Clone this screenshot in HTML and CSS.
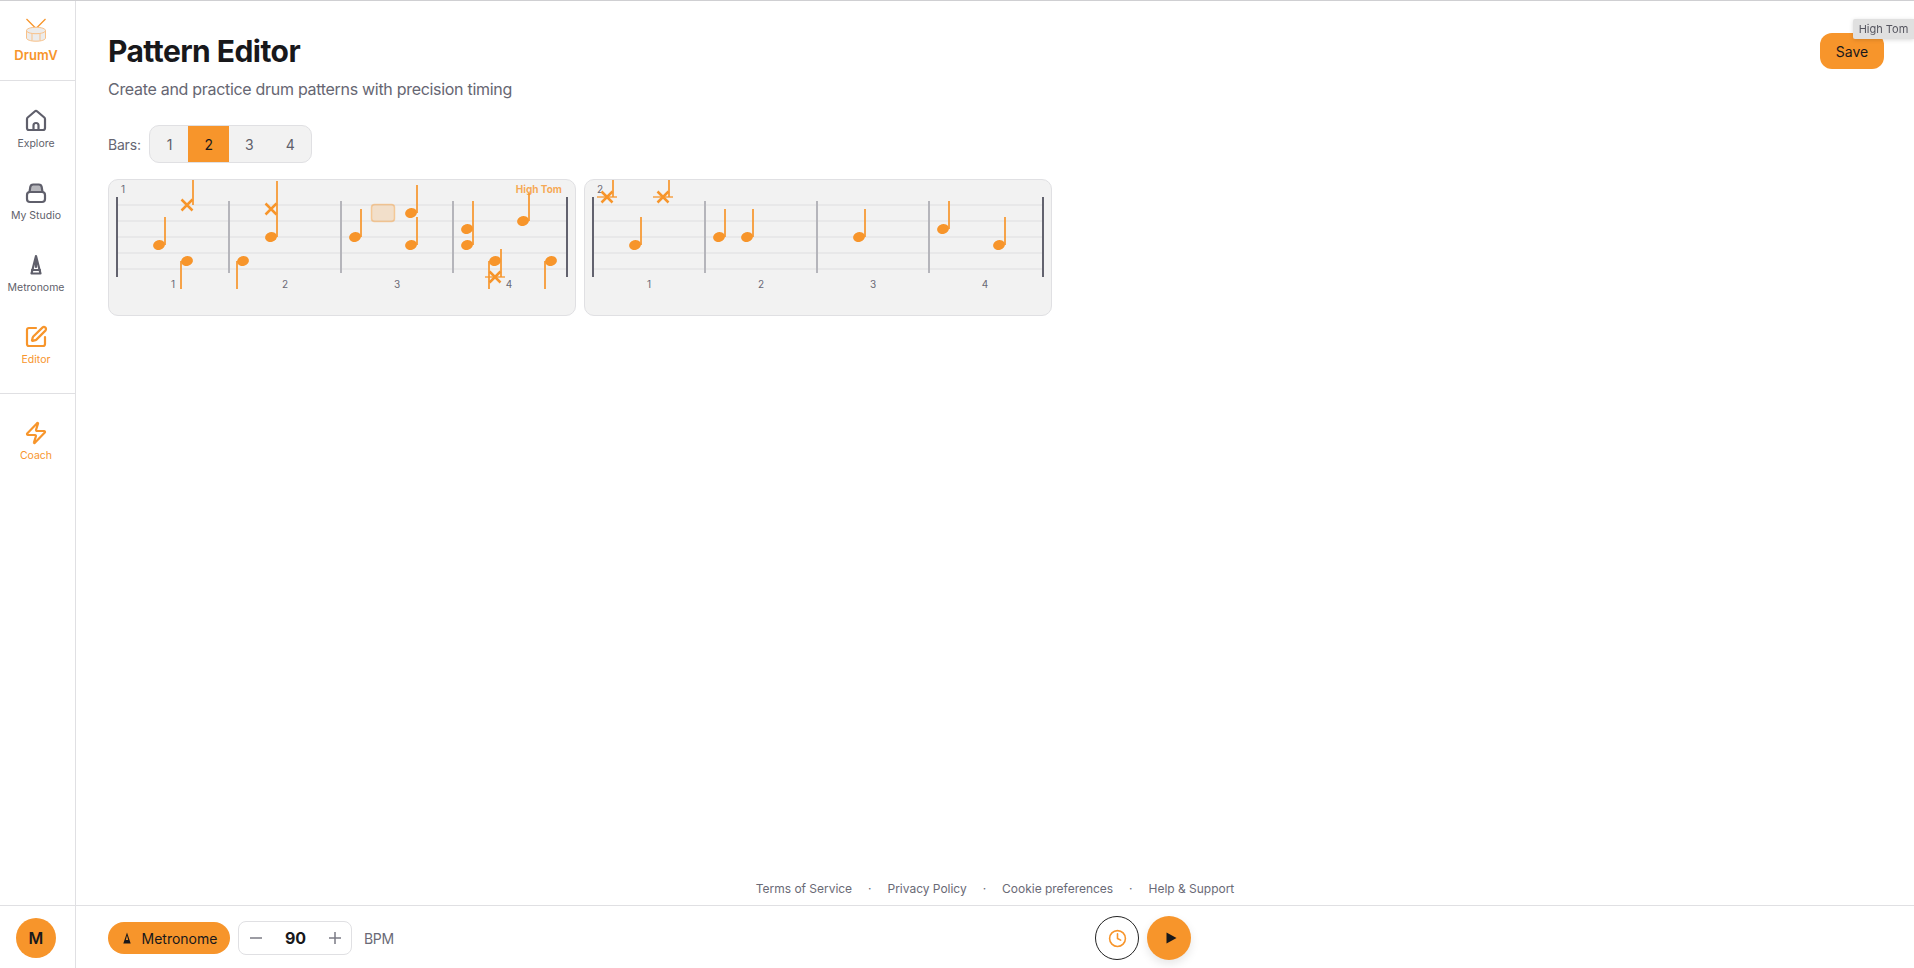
FILE: index.html
```html
<!DOCTYPE html>
<html lang="en">
<head>
<meta charset="utf-8">
<title>Pattern Editor</title>
<link rel="stylesheet" href="styles.css">
</head>
<body>
<div class="app">
  <div class="upper">
    <aside class="sidebar">
      <div class="brand">
        <svg class="logo" viewBox="0 0 24 26" width="24" height="26">
          <path class="logo-stick" d="M2.5 2 12 11.5 21.5 2"/>
          <path class="logo-body" d="M2.5 13.5c0-1.800 4-3.200 9.500-3.200s9.500 1.400 9.500 3.200v7.500c0 1.800-4 3.200-9.500 3.200s-9.500-1.400-9.500-3.200z"/>
          <path class="logo-rim" d="M2.500 13.500c0 1.800 4 3.200 9.500 3.200s9.500-1.400 9.500-3.200M8 16.500v7M16 16.500v7"/>
        </svg>
        <span class="brand-name">DrumV</span>
      </div>
      <nav class="nav nav-main">
        <a class="nav-item">
          <svg class="icon" viewBox="0 0 24 24"><path d="M3 10a2 2 0 0 1 .7-1.500l7-6a2 2 0 0 1 2.600 0l7 6A2 2 0 0 1 21 10v9a2 2 0 0 1-2 2H5a2 2 0 0 1-2-2z"/><path d="M14.500 21v-4.500a2.500 2.500 0 0 0-5 0V21"/></svg>
          <span>Explore</span>
        </a>
        <a class="nav-item">
          <svg class="icon" viewBox="0 0 24 24"><rect x="3" y="11" width="18" height="10" rx="3"/><path class="half" d="M5.500 11 6.300 6a3 3 0 0 1 3-2.500h5.400a3 3 0 0 1 3 2.500l.8 5z"/></svg>
          <span>My Studio</span>
        </a>
        <a class="nav-item">
          <svg class="icon" viewBox="0 0 24 24"><path d="M12 3 7.500 20.500h9z"/><path d="M12 8v6M8 17h8"/></svg>
          <span>Metronome</span>
        </a>
        <a class="nav-item is-active">
          <svg class="icon" viewBox="0 0 24 24"><path d="M12 3H5a2 2 0 0 0-2 2v14a2 2 0 0 0 2 2h14a2 2 0 0 0 2-2v-7"/><path d="M18.400 2.600a2.100 2.100 0 1 1 3 3L12.400 14.600a2 2 0 0 1-.9.500l-2.900.800a.5.5 0 0 1-.6-.6l.8-2.900a2 2 0 0 1 .5-.9z"/></svg>
          <span>Editor</span>
        </a>
      </nav>
      <nav class="nav nav-coach">
        <a class="nav-item is-active">
          <svg class="icon" viewBox="0 0 24 24"><path d="M4 14a1 1 0 0 1-.8-1.600l9.900-10.200a.5.5 0 0 1 .9.500l-1.900 6a1 1 0 0 0 .9 1.300h7a1 1 0 0 1 .8 1.600l-9.900 10.200a.5.5 0 0 1-.9-.500l1.900-6a1 1 0 0 0-.9-1.300z"/></svg>
          <span>Coach</span>
        </a>
      </nav>
    </aside>

    <main class="main">
      <div class="content">
        <header class="page-head">
          <div>
            <h1 class="title">Pattern Editor</h1>
            <p class="subtitle">Create and practice drum patterns with precision timing</p>
          </div>
          <button class="save">Save</button>
        </header>

        <div class="bars-row">
          <span class="bars-label">Bars:</span>
          <div class="bars-group">
            <button class="bar-btn">1</button>
            <button class="bar-btn is-on">2</button>
            <button class="bar-btn">3</button>
            <button class="bar-btn">4</button>
          </div>
        </div>

        <div class="cards">
          <section class="card">
            <svg class="score" viewBox="109 180 466 135" width="466" height="135">
              <g class="staff"><path d="M117 205H567M117 221H567M117 237H567M117 253H567M117 269H567"/></g>
              <path class="bar-end" d="M117 197V277M567 197V277"/>
              <path class="bar-mid" d="M229 201V273M341 201V273M453 201V273"/>
              <text class="measure" x="123" y="193" text-anchor="middle">1</text>
              <g class="beats" text-anchor="middle">
                <text x="173" y="288">1</text><text x="285" y="288">2</text><text x="397" y="288">3</text><text x="509" y="288">4</text>
              </g>
              <rect class="hover" x="371.500" y="204.500" width="23" height="17" rx="3"/>
              <path class="stem" d="M165 217V245M193 170V205M181 261V289M237 261V289M277 181V237M361 209V237M417 185V213M417 217V245M473 201V245M501 249V277M489 261V289M529 193V221M545 261V289"/>
              <path class="ledger" d="M485 277H505"/>
              <path class="cross" d="M181.500 199.500 192.500 210.500M192.500 199.500 181.500 210.500M265.500 203.500 276.500 214.500M276.500 203.500 265.500 214.500M489.500 271.500 500.500 282.500M500.500 271.500 489.500 282.500"/>
              <g class="heads">
                <ellipse cx="159" cy="245" rx="6" ry="5" transform="rotate(-15 159 245)"/>
                <ellipse cx="187" cy="261" rx="6" ry="5" transform="rotate(-15 187 261)"/>
                <ellipse cx="243" cy="261" rx="6" ry="5" transform="rotate(-15 243 261)"/>
                <ellipse cx="271" cy="237" rx="6" ry="5" transform="rotate(-15 271 237)"/>
                <ellipse cx="355" cy="237" rx="6" ry="5" transform="rotate(-15 355 237)"/>
                <ellipse cx="411" cy="213" rx="6" ry="5" transform="rotate(-15 411 213)"/>
                <ellipse cx="411" cy="245" rx="6" ry="5" transform="rotate(-15 411 245)"/>
                <ellipse cx="467" cy="229" rx="6" ry="5" transform="rotate(-15 467 229)"/>
                <ellipse cx="467" cy="245" rx="6" ry="5" transform="rotate(-15 467 245)"/>
                <ellipse cx="495" cy="261" rx="6" ry="5" transform="rotate(-15 495 261)"/>
                <ellipse cx="523" cy="221" rx="6" ry="5" transform="rotate(-15 523 221)"/>
                <ellipse cx="551" cy="261" rx="6" ry="5" transform="rotate(-15 551 261)"/>
              </g>
              <text class="hover-label" x="562" y="193" text-anchor="end">High Tom</text>
            </svg>
          </section>
          <section class="card">
            <svg class="score" viewBox="585 180 466 135" width="466" height="135">
              <g class="staff"><path d="M593 205H1043M593 221H1043M593 237H1043M593 253H1043M593 269H1043"/></g>
              <path class="bar-end" d="M593 197V277M1043 197V277"/>
              <path class="bar-mid" d="M705 201V273M817 201V273M929 201V273"/>
              <text class="measure" x="600" y="193" text-anchor="middle">2</text>
              <g class="beats" text-anchor="middle">
                <text x="649" y="288">1</text><text x="761" y="288">2</text><text x="873" y="288">3</text><text x="985" y="288">4</text>
              </g>
              <path class="stem" d="M613 170V197M669 170V197M641 217V245M725 209V237M753 209V237M865 209V237M949 201V229M1005 217V245"/>
              <path class="ledger" d="M597 197H617M653 197H673"/>
              <path class="cross" d="M601.500 191.500 612.500 202.500M612.500 191.500 601.500 202.500M657.500 191.500 668.500 202.500M668.500 191.500 657.500 202.500"/>
              <g class="heads">
                <ellipse cx="635" cy="245" rx="6" ry="5" transform="rotate(-15 635 245)"/>
                <ellipse cx="719" cy="237" rx="6" ry="5" transform="rotate(-15 719 237)"/>
                <ellipse cx="747" cy="237" rx="6" ry="5" transform="rotate(-15 747 237)"/>
                <ellipse cx="859" cy="237" rx="6" ry="5" transform="rotate(-15 859 237)"/>
                <ellipse cx="943" cy="229" rx="6" ry="5" transform="rotate(-15 943 229)"/>
                <ellipse cx="999" cy="245" rx="6" ry="5" transform="rotate(-15 999 245)"/>
              </g>
            </svg>
          </section>
        </div>
      </div>

      <footer class="links">
        <a>Terms of Service</a><span class="dot">·</span>
        <a>Privacy Policy</a><span class="dot">·</span>
        <a>Cookie preferences</a><span class="dot">·</span>
        <a>Help &amp; Support</a>
      </footer>
    </main>
  </div>

  <div class="lower">
    <div class="avatar-cell"><span class="avatar">M</span></div>
    <div class="transport">
      <div class="transport-left">
        <button class="metro-pill">
          <svg class="metro-icon" viewBox="0 0 12 12" width="12" height="12"><path d="M6 .5 2.300 11.500h7.400zM6 3.500 4.800 8h2.400z" fill-rule="evenodd"/></svg>
          Metronome
        </button>
        <div class="stepper">
          <svg class="step" viewBox="0 0 14 14" width="14" height="14"><path d="M1 7h12"/></svg>
          <span class="bpm-value">90</span>
          <svg class="step" viewBox="0 0 14 14" width="14" height="14"><path d="M1 7h12M7 1v12"/></svg>
        </div>
        <span class="bpm-label">BPM</span>
      </div>
      <div class="transport-center">
        <button class="round clock">
          <svg viewBox="0 0 24 24" width="19" height="19"><circle cx="12" cy="12" r="10"/><path d="M12 6v6l4 2"/></svg>
        </button>
        <button class="round play">
          <svg viewBox="0 0 12 12" width="12" height="12"><path d="M1.500 .5 11.500 6l-10 5.500z"/></svg>
        </button>
      </div>
    </div>
  </div>
</div>
<div class="tooltip">High Tom</div>
</body>
</html>
```
FILE: styles.css
```css
* { box-sizing: border-box; }
html, body { height: 100%; }
body {
  margin: 0;
  font-family: Inter, "Liberation Sans", sans-serif;
  color: #18181b;
  background: #fff;
  overflow: hidden;
}
button { font-family: inherit; cursor: pointer; }

.app {
  height: 968px;
  display: flex;
  flex-direction: column;
  border-top: 1px solid #cfcfd2;
}
.upper { flex: 1; display: flex; min-height: 0; }

/* Sidebar */
.sidebar {
  width: 76px;
  flex: none;
  border-right: 1px solid #e0e0e3;
  display: flex;
  flex-direction: column;
}
.brand {
  height: 80px;
  flex: none;
  border-bottom: 1px solid #e0e0e3;
  padding: 16px 3px 0 0;
  display: flex;
  flex-direction: column;
  align-items: center;
  gap: 4px;
}
.logo { display: block; }
.logo-stick { fill: none; stroke: #f7952b; stroke-width: 1.300; }
.logo-body { fill: #ececec; stroke: #f9c188; stroke-width: 1; }
.logo-rim { fill: none; stroke: #f9c188; stroke-width: 1; }
.brand-name { font-size: 13px; line-height: 16px; font-weight: 600; color: #f7952b; letter-spacing: .1px; }

.nav { display: flex; flex-direction: column; }
.nav-main { padding: 13px 3px 11px 0; border-bottom: 1px solid #e0e0e3; }
.nav-coach { padding: 12px 3px 0 0; }
.nav-item {
  height: 72px;
  display: flex;
  flex-direction: column;
  align-items: center;
  justify-content: center;
  gap: 4px;
  font-size: 10.500px;
  line-height: 14px;
  color: #5f5f6b;
}
.nav-item.is-active { color: #f7952b; }
.icon {
  width: 24px;
  height: 24px;
  fill: none;
  stroke: currentColor;
  stroke-width: 2.200;
  stroke-linecap: round;
  stroke-linejoin: round;
}
.icon .half { fill: currentColor; fill-opacity: .45; }

/* Main */
.main { flex: 1; min-width: 0; display: flex; flex-direction: column; }
.content { flex: 1; padding: 32px 30px 0 32px; }
.page-head { display: flex; justify-content: space-between; align-items: flex-start; }
.title { margin: 0; font-size: 30px; line-height: 36px; font-weight: 700; letter-spacing: -.55px; color: #18181b; }
.subtitle { margin: 8px 0 0; font-size: 16px; line-height: 24px; letter-spacing: -.3px; color: #666672; }
.save {
  width: 64px;
  height: 36px;
  border: 0;
  border-radius: 12px;
  background: #f7952b;
  color: #18181b;
  font-size: 14px;
}

.bars-row { margin-top: 24px; display: flex; align-items: center; gap: 8px; }
.bars-label { font-size: 14px; letter-spacing: -.2px; color: #666672; }
.bars-group {
  display: flex;
  height: 38px;
  padding-left: 1px;
  border: 1px solid #e0e0e3;
  border-radius: 10px;
  background: #f2f2f2;
  overflow: hidden;
}
.bar-btn {
  border: 0;
  background: transparent;
  padding: 0 16px;
  font-size: 14px;
  color: #5f5f6b;
}
.bar-btn.is-on { background: #f7952b; color: #18181b; }

.cards { margin-top: 16px; display: flex; gap: 8px; }
.card {
  width: 468px;
  height: 137px;
  border: 1px solid #e0e0e3;
  border-radius: 10px;
  background: #f2f2f2;
  overflow: hidden;
}
.score { display: block; font-family: Inter, sans-serif; }
.staff path { fill: none; stroke: #e8e8e9; stroke-width: 2; }
.bar-end { fill: none; stroke: #62626e; stroke-width: 2; }
.bar-mid { fill: none; stroke: #b5b5bb; stroke-width: 2; }
.measure, .beats text { font-size: 10px; fill: #6a6a76; }
.stem { fill: none; stroke: #f7952b; stroke-opacity: .85; stroke-width: 2; }
.ledger { fill: none; stroke: #f7952b; stroke-opacity: .85; stroke-width: 1.500; }
.cross { fill: none; stroke: #f7952b; stroke-width: 2.500; }
.heads ellipse { fill: #f7952b; }
.hover { fill: #f7952b; fill-opacity: .2; stroke: #f7952b; stroke-opacity: .4; stroke-width: 1.500; }
.hover-label { font-size: 10px; font-weight: 700; fill: #f7952b; fill-opacity: .8; }

.links {
  flex: none;
  height: 34px;
  display: flex;
  justify-content: center;
  align-items: center;
  padding-top: 1px;
  font-size: 12px;
  letter-spacing: -.02px;
  color: #6a6a76;
}
.dot { margin: 0 16px; }

/* Bottom bar */
.lower { height: 63px; flex: none; display: flex; border-top: 1px solid #e0e0e3; }
.avatar-cell {
  width: 76px;
  flex: none;
  border-right: 1px solid #e0e0e3;
  padding: 2px 3px 0 0;
  display: flex;
  align-items: center;
  justify-content: center;
}
.avatar {
  width: 40px;
  height: 40px;
  border-radius: 50%;
  background: #f7952b;
  display: flex;
  align-items: center;
  justify-content: center;
  font-size: 16px;
  font-weight: 600;
  color: #18181b;
}
.transport { flex: 1; display: flex; align-items: center; padding: 2px 32px 0; }
.transport-left { width: 287px; flex: none; display: flex; align-items: center; gap: 8px; }
.metro-pill {
  height: 32px;
  width: 122px;
  border: 0;
  border-radius: 16px;
  background: #f7952b;
  color: #18181b;
  font-size: 14px;
  display: flex;
  align-items: center;
  justify-content: center;
  gap: 9px;
}
.metro-icon { fill: #18181b; }
.stepper {
  width: 114px;
  height: 34px;
  border: 1px solid #e0e0e3;
  border-radius: 8px;
  display: flex;
  align-items: center;
  justify-content: space-between;
  padding: 0 9px 0 10px;
}
.step { fill: none; stroke: #7b7b85; stroke-width: 1.500; }
.bpm-value { font-size: 16px; font-weight: 700; color: #18181b; }
.bpm-label { margin-left: 4px; font-size: 14px; letter-spacing: -.3px; color: #6a6a76; }
.transport-center {
  margin-left: 700px;
  display: flex;
  gap: 8px;
}
.round {
  width: 44px;
  height: 44px;
  border-radius: 50%;
  display: flex;
  align-items: center;
  justify-content: center;
  padding: 0;
}
.clock { border: 1px solid #222; background: #fff; }
.clock svg { fill: none; stroke: #f7952b; stroke-width: 2; stroke-linecap: round; stroke-linejoin: round; }
.play { border: 0; background: #f7952b; box-shadow: 0 4px 10px rgba(0, 0, 0, .1); }
.play svg { fill: #18181b; margin-left: 3px; }

.tooltip {
  position: fixed;
  top: 19px;
  right: 0;
  height: 20px;
  width: 61px;
  background: #e0e0e0;
  box-shadow: 0 1px 4px rgba(0, 0, 0, .15);
  border-radius: 2px 0 0 2px;
  font-size: 11px;
  line-height: 20px;
  text-align: center;
  color: #55555f;
}
```
